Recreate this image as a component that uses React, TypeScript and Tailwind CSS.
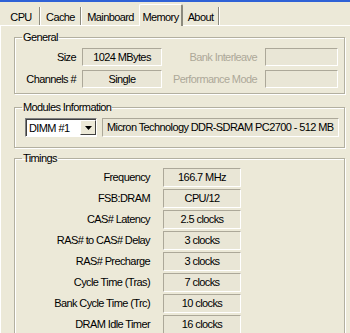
import React from "react";

const font = { fontFamily: '"Liberation Sans", Arial, sans-serif' };

function Box({ children, w, className = "" }: { children?: React.ReactNode; w: string; className?: string }) {
  return (
    <div
      className={`${w} ${className} flex items-center justify-center border border-t-[#aca899] border-l-[#aca899] border-b-white border-r-white bg-[#e9e6d6] text-black whitespace-nowrap`}
    >
      {children}
    </div>
  );
}

function Group({ title, className = "", children }: { title: string; className?: string; children: React.ReactNode }) {
  return (
    <fieldset
      className={`border border-[#b3b0a0] shadow-[inset_1px_1px_0_#fff,1px_1px_0_#fff] ${className}`}
    >
      <legend className="ml-[7px] px-[1px] leading-[13px] text-black">{title}</legend>
      {children}
    </fieldset>
  );
}

const timings: [string, string][] = [
  ["Frequency", "166.7 MHz"],
  ["FSB:DRAM", "CPU/12"],
  ["CAS# Latency", "2.5 clocks"],
  ["RAS# to CAS# Delay", "3 clocks"],
  ["RAS# Precharge", "3 clocks"],
  ["Cycle Time (Tras)", "7 clocks"],
  ["Bank Cycle Time (Trc)", "10 clocks"],
  ["DRAM Idle Timer", "16 clocks"],
];

export default function App() {
  return (
    <div
      className="w-[350px] h-[333px] overflow-hidden bg-[#ece9d8] text-[11px] tracking-[-0.6px] text-black"
      style={font}
    >
      <div className="h-[2px] bg-[#2f62d6]" />
      {/* Tabs */}
      <div className="h-[23px] flex items-end pl-[3px]">
        <div className="w-[37px] h-[18px] flex items-start justify-center pt-[2px] border-r border-[#8c8a7e] shadow-[1px_0_0_#fff]">CPU</div>
        <div className="w-[40px] h-[18px] flex items-start justify-center pt-[2px] border-r border-[#8c8a7e] shadow-[1px_0_0_#fff] ml-[1px]">Cache</div>
        <div className="w-[57px] h-[18px] flex items-start justify-center pt-[2px] ml-[1px]">Mainboard</div>
        <div className="w-[44px] h-[22px] mb-[-1px] relative z-10 flex items-start justify-center pt-[4px] bg-[#ece9d8] border-l border-t border-white border-r-2 border-r-[#8c8a7e] rounded-t-[2px]">
          Memory
        </div>
        <div className="w-[36px] h-[18px] flex items-start justify-center pt-[2px] border-r border-[#8c8a7e] shadow-[1px_0_0_#fff]">About</div>
      </div>
      {/* Page */}
      <div className="h-[310px] border-t border-l border-white pl-[13px] pr-[5px]">
        <Group title="General" className="mt-[5px] pb-[5px]">
          <div className="mt-[4px] flex flex-col gap-[4px]">
            <div className="flex items-center">
              <div className="w-[61px] text-right">Size</div>
              <Box w="w-[80px] h-[18px] ml-[6px]">1024 MBytes</Box>
              <div className="w-[95px] text-right text-[#aca899]">Bank Interleave</div>
              <Box w="w-[73px] h-[18px] ml-[8px]" />
            </div>
            <div className="flex items-center">
              <div className="w-[61px] text-right">Channels #</div>
              <Box w="w-[80px] h-[18px] ml-[6px]">Single</Box>
              <div className="w-[95px] text-right text-[#aca899]">Performance Mode</div>
              <Box w="w-[73px] h-[18px] ml-[8px]" />
            </div>
          </div>
        </Group>
        <Group title="Modules Information" className="mt-[7px] pb-[10px]">
          <div className="mt-[4px] flex items-center pl-[10px]">
            <div className="w-[72px] h-[19px] flex border border-t-[#808080] border-l-[#808080] border-b-white border-r-white shadow-[inset_1px_1px_0_#404040] bg-white">
              <div className="flex-1 pl-[3px] pt-[2px] leading-[14px]">DIMM #1</div>
              <div className="w-[16px] h-[15px] mt-[1px] flex items-center justify-center bg-[#ece9d8] border border-t-white border-l-white border-b-[#404040] border-r-[#404040]">
                <svg width="7" height="4" viewBox="0 0 7 4"><path d="M0 0h7L3.5 4z" fill="#000" /></svg>
              </div>
            </div>
            <Box w="w-[237px] h-[19px] ml-[5px]" className="justify-start pl-[4px]">
              Micron Technology DDR-SDRAM PC2700 - 512 MB
            </Box>
          </div>
        </Group>
        <Group title="Timings" className="mt-[4px] h-[200px]">
          <div className="flex flex-col gap-[2px] mt-[3px]">
            {timings.map(([l, v]) => (
              <div key={l} className="flex items-center">
                <div className="w-[135px] text-right whitespace-nowrap">{l}</div>
                <Box w="w-[78px] h-[19px] ml-[13px]">{v}</Box>
              </div>
            ))}
          </div>
        </Group>
      </div>
    </div>
  );
}
